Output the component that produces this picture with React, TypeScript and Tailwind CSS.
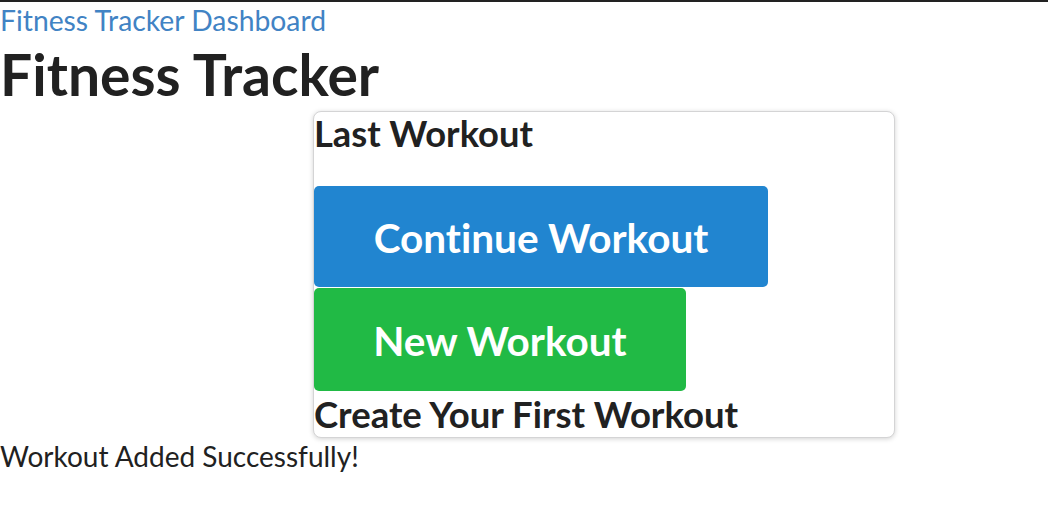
export default function App() {
  return (
    <div className="min-h-screen bg-white border-t-2 border-[#222] font-['Lato',sans-serif] text-[#212121] [font-variant-ligatures:none]">
      <a href="#" className="block text-[28.3px] leading-[36px] text-[#4183c4]">
        Fitness Tracker Dashboard
      </a>
      <h1 className="text-[57px] leading-[73px] font-bold">Fitness Tracker</h1>

      <div className="ml-[313px] w-[582px] rounded-[8px] border border-[#d4d4d5] bg-white shadow-[0_1px_5px_0_rgba(0,0,0,0.18)]">
        <h2 className="text-[36.3px] leading-[43px] font-bold">Last Workout</h2>
        <div className="mt-[31px] flex flex-col items-start gap-px">
          <button className="flex h-[101px] w-[454px] items-center justify-center rounded-[5px] bg-[#2185d0] pt-[3px] text-[40.5px] font-bold text-white">
            Continue Workout
          </button>
          <button className="flex h-[103px] w-[372px] items-center justify-center rounded-[5px] bg-[#21ba45] pt-[3px] text-[40.5px] font-bold text-white">
            New Workout
          </button>
        </div>
        <h2 className="text-[36.5px] leading-[46px] font-bold">Create Your First Workout</h2>
      </div>

      <p className="text-[28px] leading-[36px]">Workout Added Successfully!</p>
    </div>
  );
}
